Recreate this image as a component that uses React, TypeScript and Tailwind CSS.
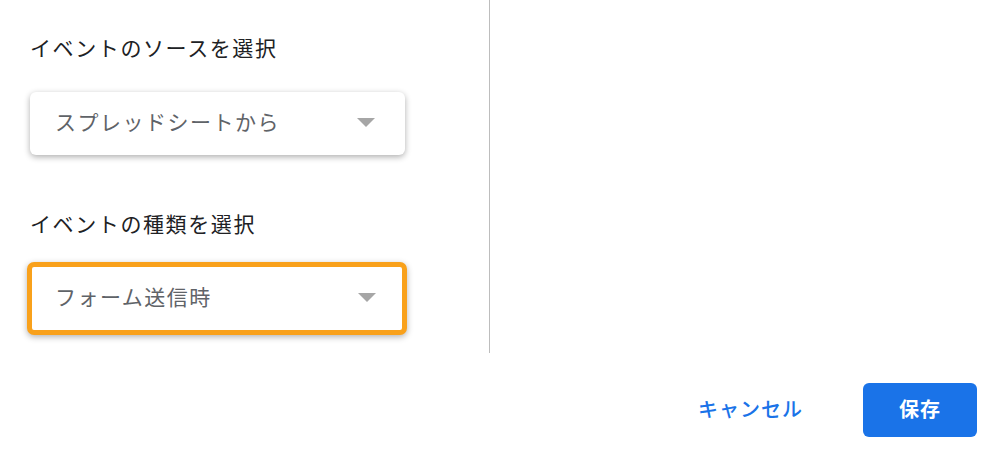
import React from "react";

const font = { fontFamily: '"Noto Sans CJK JP", "Noto Sans", sans-serif' };

function Arrow() {
  return (
    <svg width="18" height="9" viewBox="0 0 18 9" className="shrink-0">
      <path d="M0 0 L18 0 L9 9 Z" fill="#a6a6a6" />
    </svg>
  );
}

function Select({ value, focused }: { value: string; focused?: boolean }) {
  return (
    <div
      className={
        focused
          ? "w-[380px] h-[73px] -ml-[3px] rounded-[7px] border-[5px] border-[#f9a11b] bg-white shadow-[0_2px_6px_rgba(0,0,0,0.3)] flex items-center pl-[23px] pr-[26px] pb-[3px]"
          : "w-[375px] h-[63px] rounded-[6px] bg-white shadow-[0_2px_6px_rgba(0,0,0,0.32)] flex items-center pl-[25px] pr-[30px] pb-[3px]"
      }
    >
      <span className="flex-1 text-[21px] tracking-[1.5px] text-[#5f6368]">{value}</span>
      <Arrow />
    </div>
  );
}

export default function App() {
  return (
    <div className="w-[1002px] h-[472px] bg-white text-[#202124]" style={font}>
      <div className="flex h-[353px]">
        <div className="w-[490px] border-r border-[#bdbdbd] pl-[30px] pt-[33px]">
          <div className="text-[21px] tracking-[1.6px] leading-[28px]">イベントのソースを選択</div>
          <div className="mt-[31px]">
            <Select value="スプレッドシートから" />
          </div>
          <div className="mt-[54px] text-[21px] tracking-[1.6px] leading-[28px]">イベントの種類を選択</div>
          <div className="mt-[25px]">
            <Select value="フォーム送信時" focused />
          </div>
        </div>
      </div>
      <div className="flex justify-end items-center gap-[60px] pr-[25px] pt-[30px]">
        <button className="text-[20px] font-medium tracking-[1px] text-[#1a73e8] pb-[3px]">キャンセル</button>
        <button className="w-[114px] h-[54px] rounded-[6px] bg-[#1a73e8] text-white text-[20px] font-bold tracking-[1px] pb-[3px]">
          保存
        </button>
      </div>
    </div>
  );
}
